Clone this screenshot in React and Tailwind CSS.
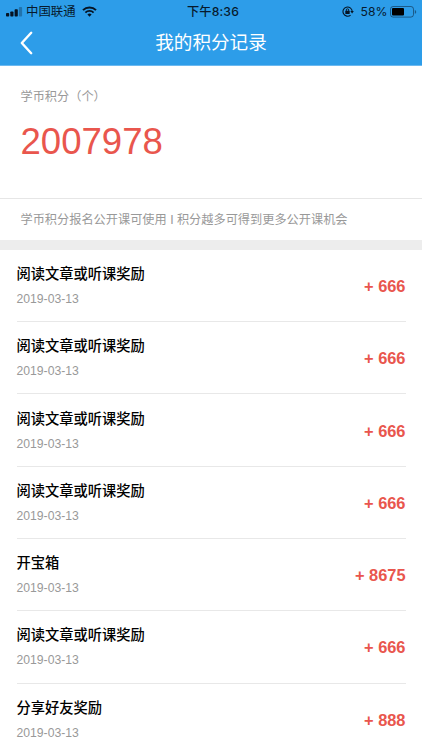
const records = [
  { title: "阅读文章或听课奖励", date: "2019-03-13", amount: 666 },
  { title: "阅读文章或听课奖励", date: "2019-03-13", amount: 666 },
  { title: "阅读文章或听课奖励", date: "2019-03-13", amount: 666 },
  { title: "阅读文章或听课奖励", date: "2019-03-13", amount: 666 },
  { title: "开宝箱", date: "2019-03-13", amount: 8675 },
  { title: "阅读文章或听课奖励", date: "2019-03-13", amount: 666 },
  { title: "分享好友奖励", date: "2019-03-13", amount: 888 },
];

function SignalIcon() {
  return (
    <svg width="17" height="10" viewBox="0 0 17 10" fill="#061424">
      <rect x="0" y="6" width="3.2" height="3.5" rx="0.8" />
      <rect x="4.3" y="4.4" width="3.2" height="5.1" rx="0.8" />
      <rect x="8.6" y="2.3" width="3.2" height="7.2" rx="0.8" />
      <rect x="12.9" y="0" width="3.2" height="9.5" rx="0.8" opacity="0.3" />
    </svg>
  );
}

function WifiIcon() {
  return (
    <svg width="15" height="11" viewBox="0 0 15 11" fill="none" stroke="#061424">
      <path d="M1 4.1a9.2 9.2 0 0 1 13 0" strokeWidth="2" />
      <path d="M3.4 6.6a5.8 5.8 0 0 1 8.2 0" strokeWidth="1.8" />
      <path d="M7.5 10.7L5.4 8.6a3 3 0 0 1 4.2 0z" fill="#061424" stroke="none" />
    </svg>
  );
}

function RotationLockIcon() {
  return (
    <svg width="12" height="11" viewBox="0 0 12 11" fill="none" stroke="#061424">
      <path d="M8.6 9.1a4.6 4.6 0 1 1 1.6-3.8" strokeWidth="1.1" />
      <path d="M8.3 5h3.5L10.1 7.4z" fill="#061424" stroke="none" />
      <rect x="3.3" y="4.8" width="4.4" height="3.2" rx="0.4" fill="#061424" stroke="none" />
      <path d="M4.3 5V4a1.2 1.2 0 0 1 2.4 0v1" strokeWidth="0.9" />
    </svg>
  );
}

function BatteryIcon() {
  return (
    <svg width="27" height="12" viewBox="0 0 27 12">
      <rect x="0.5" y="0.5" width="23" height="10.6" rx="2.6" fill="none" stroke="#0a1a2c" strokeOpacity="0.5" />
      <rect x="2" y="2" width="12" height="7.6" rx="1" fill="#000" />
      <path d="M24.8 4v3.8c.8-.3 1.4-1 1.4-1.9s-.6-1.6-1.4-1.9z" fill="#0a1a2c" fillOpacity="0.5" />
    </svg>
  );
}

function StatusBar() {
  return (
    <div className="grid h-[22px] grid-cols-3 items-center pl-[6px] pr-[5px] text-[12.4px] leading-[22px] text-[#071a2d]">
      <div className="flex items-center">
        <SignalIcon />
        <span className="ml-[3px] pt-px">中国联通</span>
        <span className="ml-[6px]">
          <WifiIcon />
        </span>
      </div>
      <div className="pl-[3px] text-center font-['Inter','Noto_Sans_CJK_SC',sans-serif] text-[12.2px] font-medium tracking-[0.15px]">
        下午8:36
      </div>
      <div className="flex items-center justify-end">
        <span className="-mt-px">
          <RotationLockIcon />
        </span>
        <span className="ml-[7px] mr-[2.5px] font-['Inter',sans-serif] text-[12.2px]">58%</span>
        <BatteryIcon />
      </div>
    </div>
  );
}

export default function App() {
  return (
    <div className="h-[750px] w-[422px] overflow-hidden bg-white font-['Liberation_Sans','Noto_Sans_CJK_SC',sans-serif]">
      <header className="h-[66px] border-b border-[#6cb9f0] bg-[#2d9de9]">
        <StatusBar />
        <div className="grid h-[42px] grid-cols-3 items-center">
          <button type="button" className="pl-[20px]">
            <svg width="13" height="24" viewBox="0 0 13 24" fill="none" stroke="#fff" strokeWidth="2.4">
              <path d="M11.2 1.8L1.8 12l9.4 10.2" strokeLinecap="round" strokeLinejoin="round" />
            </svg>
          </button>
          <h1 className="whitespace-nowrap text-center text-[18.6px] leading-[28px] text-white">
            我的积分记录
          </h1>
        </div>
      </header>

      <section className="h-[132px] px-[20.5px] pt-[21px]">
        <p className="text-[12.2px] leading-[20px] text-[#999]">学币积分（个）</p>
        <p className="mt-[13px] text-[36.6px] leading-[44px] text-[#e9564d]">2007978</p>
      </section>

      <p className="h-[42px] border-t border-[#e6e6e6] pl-[20.5px] text-[12.2px] leading-[43px] text-[#999]">
        学币积分报名公开课可使用 I 积分越多可得到更多公开课机会
      </p>

      <div className="h-[9.8px] bg-[#ededed]" />

      <ul className="px-[16.5px]">
        {records.map((record, index) => (
          <li
            key={index}
            className="flex h-[72.3px] items-center justify-between border-b border-[#e8e8e8]"
          >
            <div>
              <p className="text-[14.25px] font-medium leading-[24px] text-black">{record.title}</p>
              <p className="mt-[3px] text-[12.2px] leading-[20px] text-[#999]">{record.date}</p>
            </div>
            <span className="pt-px text-[16.4px] font-bold leading-[20px] text-[#e9564d]">
              + {record.amount}
            </span>
          </li>
        ))}
      </ul>
    </div>
  );
}
